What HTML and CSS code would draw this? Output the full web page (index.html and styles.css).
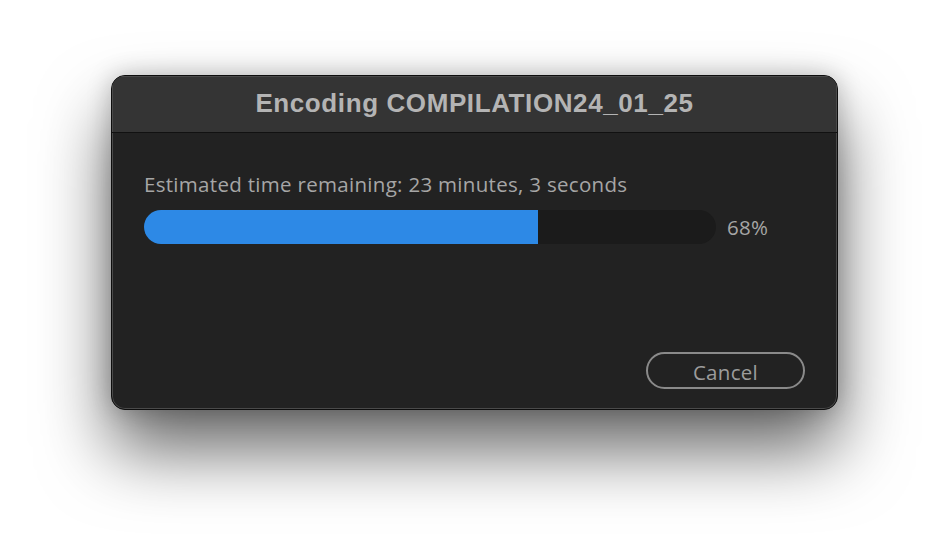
FILE: index.html
```html
<!DOCTYPE html>
<html>
<head>
<meta charset="utf-8">
<link rel="stylesheet" href="styles.css">
</head>
<body>
<div class="stage">
  <div class="window">
    <div class="titlebar">Encoding COMPILATION24_01_25</div>
    <div class="content">
      <div class="status">Estimated time remaining: 23 minutes, 3 seconds</div>
      <div class="progress-row">
        <div class="track"><div class="fill" style="width:68.9%"></div></div>
        <div class="pct">68%</div>
      </div>
      <div class="actions">
        <button class="btn">Cancel</button>
      </div>
    </div>
  </div>
</div>
</body>
</html>
```

FILE: styles.css
```css
html, body {
  margin: 0;
  padding: 0;
  background: #ffffff;
}
.stage {
  width: 950px;
  height: 558px;
  padding-top: 75px;
  padding-left: 111px;
  box-sizing: border-box;
}
.window {
  width: 727px;
  height: 335px;
  box-sizing: border-box;
  background: #222222;
  border: 1px solid #0e0e0e;
  border-radius: 14px;
  box-shadow: inset 0 0 0 1px #4a4a4a, 0 40px 70px rgba(0,0,0,0.6), 0 0 24px rgba(0,0,0,0.22);
  overflow: hidden;
  display: flex;
  flex-direction: column;
}
.titlebar {
  height: 57px;
  flex: none;
  background: #343434;
  border-bottom: 1px solid #111;
  box-shadow: inset 1px 1px 0 #4a4a4a, inset -1px 0 0 #4a4a4a;
  display: flex;
  align-items: center;
  justify-content: center;
  font-family: "Liberation Sans", Arial, sans-serif;
  font-weight: bold;
  font-size: 26px;
  letter-spacing: 0.6px;
  color: #b4b4b4;
  padding-bottom: 2px;
  box-sizing: border-box;
}
.content {
  flex: 1;
  padding: 38px 32px 20px 32px;
  display: flex;
  flex-direction: column;
  font-family: "Open Sans", sans-serif;
  color: #a6a6a6;
}
.status {
  font-size: 20.5px;
  line-height: 26px;
  letter-spacing: 0.3px;
}
.progress-row {
  margin-top: 13px;
  display: flex;
  align-items: center;
}
.track {
  width: 572px;
  height: 34px;
  border-radius: 17px;
  background: #1b1b1b;
  overflow: hidden;
}
.fill {
  height: 100%;
  background: #2d89e6;
}
.pct {
  margin-left: 11px;
  font-size: 20.5px;
  letter-spacing: 0.3px;
}
.actions {
  margin-top: auto;
  display: flex;
  justify-content: flex-end;
}
.btn {
  width: 159px;
  height: 37px;
  background: transparent;
  border: 2px solid #8a8a8a;
  border-radius: 19px;
  color: #9c9c9c;
  font-family: "Open Sans", sans-serif;
  font-size: 20.5px;
  letter-spacing: 0.3px;
  padding: 3px 0 0 0;
}
```
